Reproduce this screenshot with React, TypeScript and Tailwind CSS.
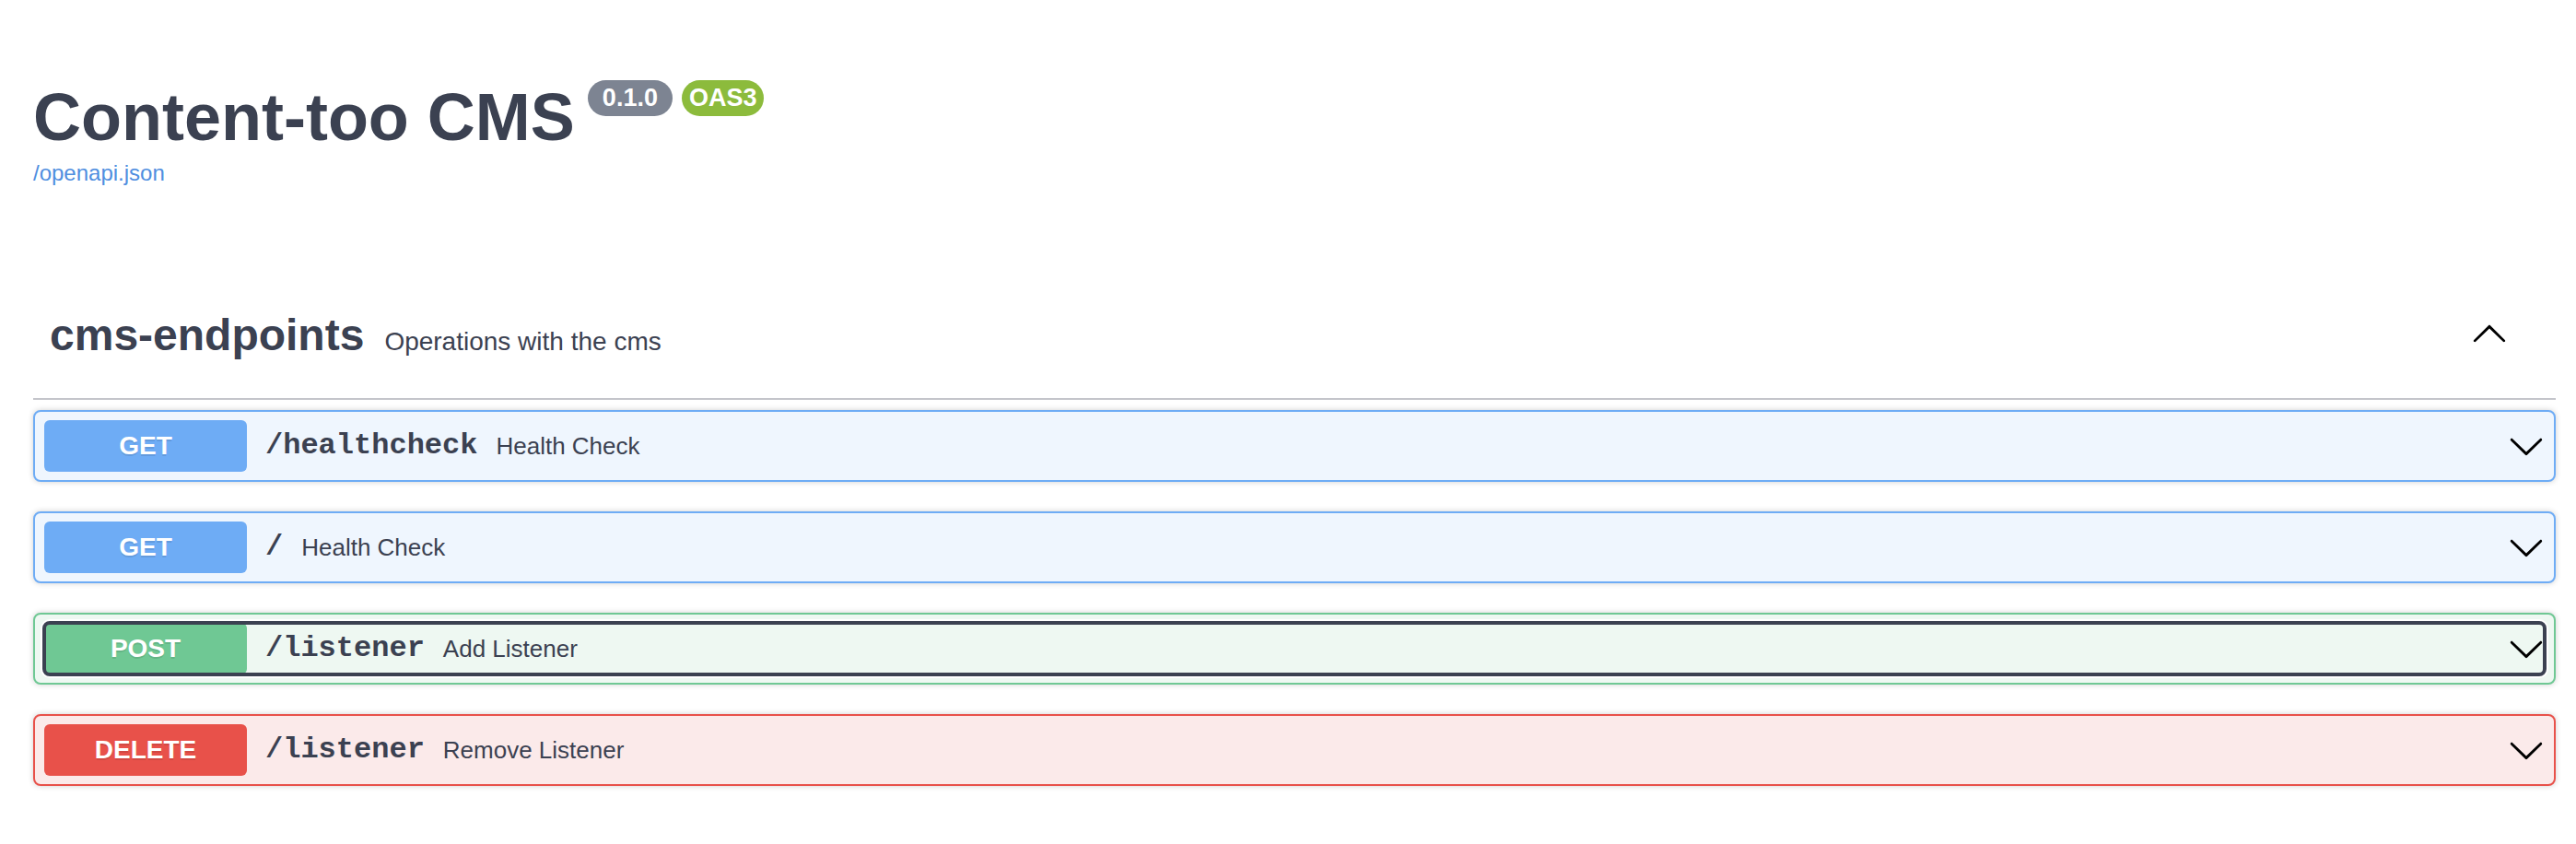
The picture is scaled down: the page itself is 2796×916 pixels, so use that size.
type Method = "GET" | "POST" | "DELETE";

type Op = {
    method: Method;
    path: string;
    summary: string;
    focused?: boolean;
};

const ops: Op[] = [
    { method: "GET", path: "/healthcheck", summary: "Health Check" },
    { method: "GET", path: "/", summary: "Health Check" },
    { method: "POST", path: "/listener", summary: "Add Listener", focused: true },
    { method: "DELETE", path: "/listener", summary: "Remove Listener" },
];

const methodStyles: Record<Method, { block: string; badge: string }> = {
    GET: { block: "border-[#6eacf5] bg-[#eff6fe]", badge: "bg-[#6eacf5]" },
    POST: { block: "border-[#6fc894] bg-[#eef8f2]", badge: "bg-[#6fc894]" },
    DELETE: { block: "border-[#e8514a] bg-[#fbeaea]", badge: "bg-[#e8514a]" },
};

function Arrow({ up }: { up?: boolean }) {
    return (
        <svg width="40" height="40" viewBox="0 0 20 20" className="shrink-0">
            {up ? (
                <path
                    fill="#000"
                    d="M17.418 14.908c.272.268.709.268.979 0s.271-.701 0-.969l-7.908-7.83c-.27-.268-.707-.268-.979 0l-7.908 7.83c-.27.268-.27.701 0 .969.271.268.709.268.979 0L10 7.767l7.418 7.141z"
                />
            ) : (
                <path
                    fill="#000"
                    d="M17.418 6.109c.272-.268.709-.268.979 0s.271.701 0 .969l-7.908 7.83c-.27.268-.707.268-.979 0l-7.908-7.83c-.27-.268-.27-.701 0-.969.271-.268.709-.268.979 0L10 13.25l7.418-7.141z"
                />
            )}
        </svg>
    );
}

function Operation({ op }: { op: Op }) {
    const s = methodStyles[op.method];
    return (
        <div
            className={`mb-[32px] flex rounded-[8px] border-2 px-[10px] py-[9px] shadow-[0_0_6px_rgba(0,0,0,0.19)] ${s.block}`}
        >
            <div
                className={`flex flex-1 items-center rounded-[6px] ${
                    op.focused
                        ? "outline-[4px] outline-offset-[-2px] outline-[#3b4151] shadow-[0_0_0_4px_#ffffff]"
                        : ""
                }`}
            >
                <div
                    className={`flex h-[56px] w-[220px] items-center justify-center rounded-[6px] text-[28px] font-bold text-white [text-shadow:0_2px_0_rgba(0,0,0,0.1)] ${s.badge}`}
                >
                    {op.method}
                </div>
                <span className="px-[20px] font-['Liberation_Mono',monospace] text-[32px] font-bold text-[#3b4151]">
                    {op.path}
                </span>
                <span className="text-[26px] text-[#3b4151]">{op.summary}</span>
                <div className="flex-1" />
                <Arrow />
            </div>
        </div>
    );
}

export default function App() {
    return (
        <div className="min-h-[916px] bg-white pl-[36px] pr-[22px] pt-[87px] font-['Liberation_Sans',Arial,sans-serif] text-[#3b4151]">
            <div className="flex items-start">
                <h1 className="text-[72px] font-bold leading-[80px]">Content-too CMS</h1>
                <span className="ml-[14px] flex h-[39px] items-center rounded-full bg-[#7d8492] px-[16px] text-[27px] font-bold text-white">
                    0.1.0
                </span>
                <span className="ml-[10px] flex h-[39px] items-center rounded-full bg-[#8cbb3c] px-[8px] text-[27px] font-bold text-white">
                    OAS3
                </span>
            </div>
            <div className="mt-[7px] text-[24px] leading-[28px]">
                <a className="text-[#4f8ee0]">/openapi.json</a>
            </div>

            <div className="mt-[94px] mb-[11px] flex h-[138px] items-center justify-between border-b-2 border-[#c4c5cb] pl-[18px] pr-[52px]">
                <div className="flex items-baseline">
                    <h3 className="text-[48px] font-bold leading-[55px]">cms-endpoints</h3>
                    <span className="pl-[22px] text-[28px]">Operations with the cms</span>
                </div>
                <div className="mb-[6px]">
                    <Arrow up />
                </div>
            </div>

            {ops.map((op, i) => (
                <Operation key={i} op={op} />
            ))}
        </div>
    );
}
